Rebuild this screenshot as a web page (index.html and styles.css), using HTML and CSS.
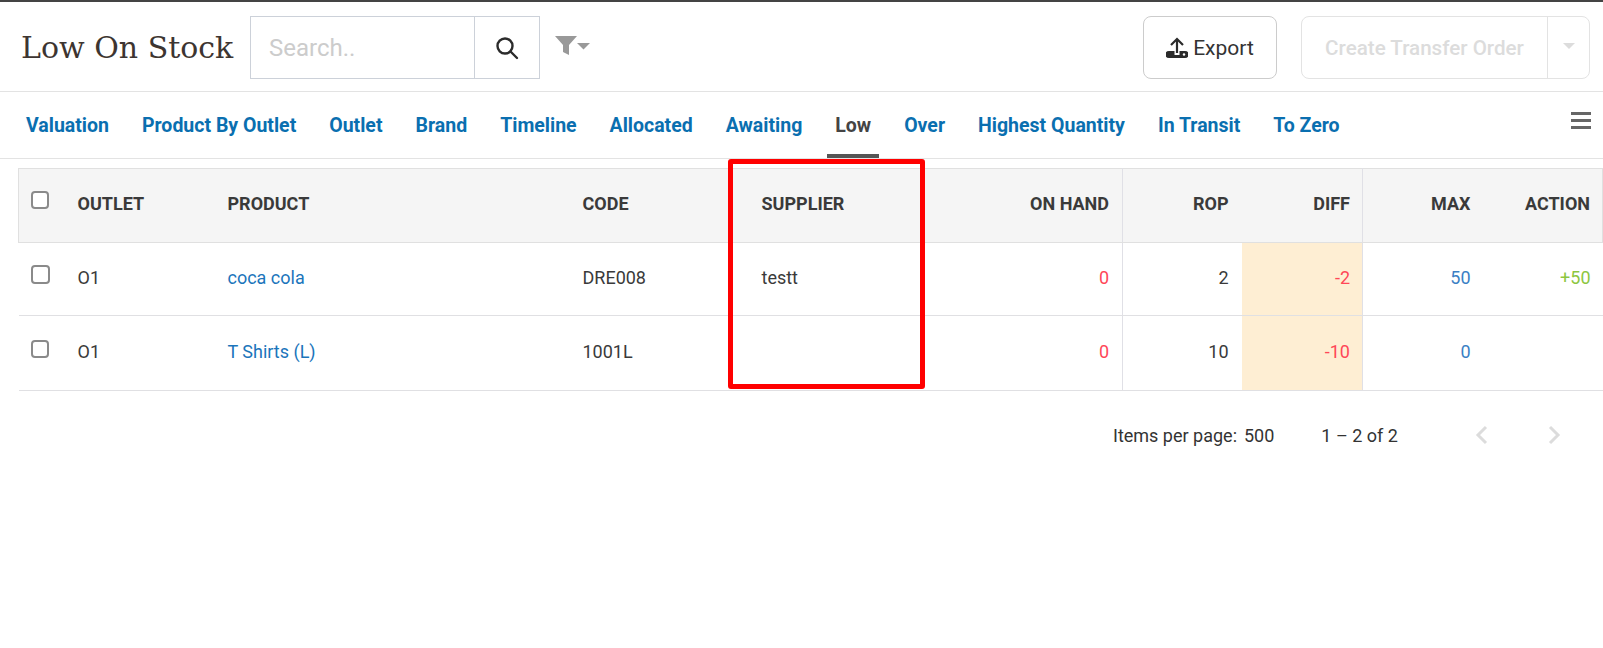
FILE: index.html
```html
<!DOCTYPE html>
<html lang="en">
<head>
<meta charset="utf-8">
<title>Low On Stock</title>
<link rel="stylesheet" href="styles.css">
</head>
<body>
<header class="topbar">
  <h1 class="title">Low On Stock</h1>
  <div class="search">
    <input class="search-input" placeholder="Search.." aria-label="Search">
    <button class="search-btn" aria-label="Search">
      <svg width="24" height="24" viewBox="0 0 24 24" fill="none" stroke="#2b2b2b" stroke-width="2.400"><circle cx="10" cy="10" r="7.500"/><path d="M15.500 15.500l6.500 6.500" stroke-linecap="round"/></svg>
    </button>
  </div>
  <div class="filter">
    <svg width="36" height="20" viewBox="0 0 36 20"><path d="M0 0h22l-8 9v10l-6-3V9z" fill="#999"/><path d="M22 7h13l-6.500 6.500z" fill="#999"/></svg>
  </div>
  <div class="actions">
    <button class="export">
      <svg width="22" height="22" viewBox="0 0 22 22"><path d="M5 8l6-6 6 6M11 2v14" fill="none" stroke="#2b2b2b" stroke-width="2.200"/><path d="M3 14h5.500v4h5v-4H19a3 3 0 0 1 0 7H3a3 3 0 0 1 0-7z" fill="#2b2b2b"/><circle cx="18" cy="17.500" r="1.200" fill="#fff"/></svg>
      <span>Export</span>
    </button>
    <div class="split">
      <span class="split-main">Create Transfer Order</span>
      <span class="split-caret"><i class="caret"></i></span>
    </div>
  </div>
</header>
<nav class="tabs">
  <a class="tab">Valuation</a>
  <a class="tab">Product By Outlet</a>
  <a class="tab">Outlet</a>
  <a class="tab">Brand</a>
  <a class="tab">Timeline</a>
  <a class="tab">Allocated</a>
  <a class="tab">Awaiting</a>
  <a class="tab active">Low</a>
  <a class="tab">Over</a>
  <a class="tab">Highest Quantity</a>
  <a class="tab">In Transit</a>
  <a class="tab">To Zero</a>
  <div class="menu"><i></i><i></i><i></i></div>
</nav>
<main class="content">
  <table class="grid">
    <colgroup>
      <col class="c-check"><col class="c-outlet"><col class="c-product"><col class="c-code"><col class="c-supplier"><col class="c-hand"><col class="c-rop"><col class="c-diff"><col class="c-num"><col class="c-num">
    </colgroup>
    <thead>
      <tr>
        <th><span class="check head-check"></span></th>
        <th>OUTLET</th><th>PRODUCT</th><th>CODE</th><th>SUPPLIER</th>
        <th class="r sep">ON HAND</th><th class="r">ROP</th><th class="r sep">DIFF</th><th class="r">MAX</th><th class="r last">ACTION</th>
      </tr>
    </thead>
    <tbody>
      <tr class="row-a">
        <td><span class="check"></span></td>
        <td>O1</td><td class="link">coca cola</td><td>DRE008</td><td>testt</td>
        <td class="r sep red">0</td><td class="r">2</td><td class="r sep red warn">-2</td><td class="r blue">50</td><td class="r green">+50</td>
      </tr>
      <tr class="row-b">
        <td><span class="check"></span></td>
        <td>O1</td><td class="link">T Shirts (L)</td><td>1001L</td><td></td>
        <td class="r sep red">0</td><td class="r">10</td><td class="r sep red warn">-10</td><td class="r blue">0</td><td class="r"></td>
      </tr>
    </tbody>
  </table>
  <div class="paginator">
    <span class="per-label">Items per page:</span>
    <span class="per-value">500</span>
    <span class="range">1 – 2 of 2</span>
    <svg class="pg-prev" width="14" height="20" viewBox="0 0 14 20" fill="none" stroke="#dcdcdc" stroke-width="3"><path d="M11 2L3 10l8 8"/></svg>
    <svg class="pg-next" width="14" height="20" viewBox="0 0 14 20" fill="none" stroke="#dcdcdc" stroke-width="3"><path d="M3 2l8 8-8 8"/></svg>
  </div>
  <div class="highlight"></div>
</main>
</body>
</html>
```
FILE: styles.css
```css
* { box-sizing: border-box; }
html, body { margin: 0; padding: 0; }
body {
  height: 648px;
  overflow: hidden;
  background: #fff;
  border-top: 2px solid #444;
  font-family: Roboto, sans-serif;
  font-size: 18px;
  color: #3a3a3a;
}
.topbar {
  display: flex;
  align-items: center;
  height: 90px;
  padding: 0 13px 0 21px;
  border-bottom: 1px solid #e3e3e3;
}
.title {
  margin: 1px 0 0;
  width: 229px;
  font-family: "DejaVu Serif", serif;
  font-size: 30px;
  font-weight: 400;
  color: #3d3531;
  white-space: nowrap;
}
.search {
  display: flex;
  width: 290px;
  height: 63px;
  margin-top: 2px;
  border: 1px solid #ccd1d9;
}
.search-input {
  flex: 1;
  min-width: 0;
  border: 0;
  outline: 0;
  padding: 0 18px;
  font: 400 24px Roboto, sans-serif;
}
.search-input::placeholder { color: #ccc; opacity: 1; }
.search-btn {
  display: flex;
  align-items: center;
  justify-content: center;
  width: 65px;
  border: 0;
  border-left: 1px solid #ccd1d9;
  background: #fff;
  padding: 0;
}
.filter { display: flex; margin: -2px 0 0 15px; }
.actions { display: flex; gap: 24px; margin-left: auto; margin-top: 2px; }
.export {
  display: flex;
  align-items: center;
  justify-content: center;
  gap: 5px;
  width: 134px;
  height: 63px;
  border: 1px solid #ccc;
  border-radius: 8px;
  background: #fff;
  font: 400 21px Roboto, sans-serif;
  color: #333;
  padding: 0;
}
.split {
  display: flex;
  width: 289px;
  height: 63px;
  border: 1px solid #e3e3e3;
  border-radius: 8px;
  color: #dcdcdc;
  font-size: 20.6px;
}
.split-main {
  flex: 1;
  display: flex;
  align-items: center;
  justify-content: center;
  font-weight: 500;
}
.split-caret {
  display: flex;
  align-items: center;
  justify-content: center;
  width: 42px;
  border-left: 1px solid #e3e3e3;
}
.caret {
  width: 0;
  height: 0;
  margin-top: -4px;
  border-left: 6px solid transparent;
  border-right: 6px solid transparent;
  border-top: 6px solid #dcdcdc;
}
.tabs {
  display: flex;
  height: 67px;
  padding-left: 18px;
  gap: 17px;
  border-bottom: 1px solid #e3e3e3;
}
.tab {
  display: flex;
  align-items: center;
  height: 66px;
  padding: 4px 8px 0;
  font-size: 19.5px;
  font-weight: 700;
  color: #0a6fb0;
  border-bottom: 4px solid transparent;
}
.tab.active { color: #444; border-bottom-color: #555; }
.menu {
  margin-left: auto;
  margin-right: 12px;
  margin-top: 20px;
  display: flex;
  flex-direction: column;
  gap: 4px;
}
.menu i { display: block; width: 20px; height: 3px; background: #666; }
.content { position: relative; padding: 9px 0 0 18px; }
.grid {
  width: 1584px;
  table-layout: fixed;
  border-collapse: collapse;
}
.c-check { width: 46px; }
.c-outlet { width: 150px; }
.c-product { width: 355px; }
.c-code { width: 179px; }
.c-supplier { width: 130px; }
.c-hand { width: 244px; }
.c-rop { width: 119px; }
.c-diff { width: 121px; }
.c-num { width: 120px; }
th, td { padding: 0 13px 3px; text-align: left; }
th {
  height: 74px;
  padding-bottom: 5px;
  background: #f5f5f5;
  border-top: 1px solid #e0e0e0;
  border-bottom: 1px solid #e0e0e0;
  font-weight: 700;
  font-size: 18px;
  color: #3a3a3a;
}
th:first-child { border-left: 1px solid #e0e0e0; padding: 0; }
td:first-child { padding: 0; }
th.last { border-right: 1px solid #e0e0e0; }
td { border-bottom: 1px solid #e0e0e3; color: #3a3a3a; }
.row-a td { height: 73px; }
.row-b td { height: 75px; }
.r { text-align: right; }
.sep { border-right: 1px solid #e0e0e6; }
th.r.sep:nth-child(8), td.r.sep.warn, th:nth-child(n+9), td:nth-child(n+9) { padding-right: 12px; }
td.link { color: #1b75bb; }
td.red { color: #ff4757; }
td.blue { color: #3b7fc4; }
td.green { color: #8cc63f; }
td.warn { background: #feeed3; }
.check {
  display: block;
  width: 18px;
  height: 18px;
  margin: -9px 0 0 12px;
  border: 2px solid #8a8a8a;
  border-radius: 4px;
  background: #fff;
}
.head-check { margin-top: -12px; }
.row-a .check { width: 19px; height: 19px; margin-left: 12px; }
.paginator {
  display: flex;
  align-items: center;
  height: 88px;
  padding-left: 1095px;
  color: #333;
}
.per-value { margin-left: 7px; }
.range { margin-left: 47px; }
.pg-prev { margin-left: 77px; }
.pg-next { margin-left: 58px; }
.highlight {
  position: absolute;
  left: 728px;
  top: 0;
  width: 197px;
  height: 230px;
  border: 5px solid #f00;
  border-radius: 3px;
}
```
